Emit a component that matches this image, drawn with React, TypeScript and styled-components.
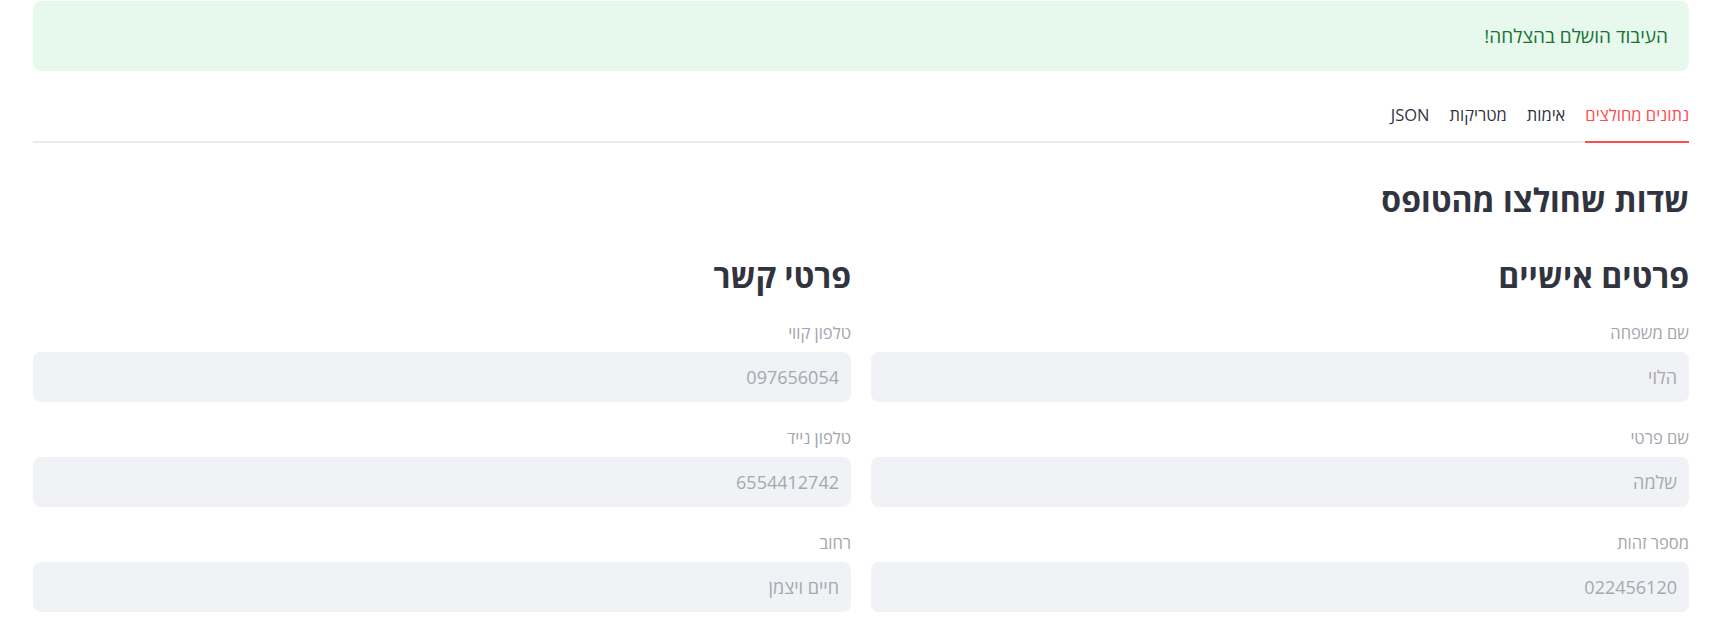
import React from "react";
import styled, { createGlobalStyle } from "styled-components";

const Global = createGlobalStyle`
  html, body { margin: 0; padding: 0; background: #ffffff; }
  body { font-family: "Open Sans", "Noto Sans", "DejaVu Sans", sans-serif; color: #31333f; }
  * { box-sizing: border-box; }
`;

const Page = styled.div`
  direction: rtl;
  padding: 1px 34px 0 33px;
  display: flex;
  flex-direction: column;
`;

const Alert = styled.div`
  height: 70px;
  border-radius: 8px;
  background: #e7f8ed;
  color: #177233;
  font-size: 19px;
  display: flex;
  align-items: center;
  padding: 0 21px;
`;

const TabList = styled.div`
  margin-top: 29px;
  display: flex;
  gap: 20px;
  border-bottom: 2px solid #ebebeb;
`;

const Tab = styled.div<{ $active?: boolean }>`
  font-size: 16.5px;
  line-height: 24px;
  padding: 3px 0 14px;
  margin-bottom: -2px;
  color: ${(p) => (p.$active ? "#ff4b4b" : "#31333f")};
  border-bottom: 2px solid ${(p) => (p.$active ? "#ff4b4b" : "transparent")};
`;

const Title = styled.h3`
  margin: 37px 0 0;
  font-size: 32px;
  line-height: 40px;
  font-weight: 700;
  color: #31333f;
`;

const Columns = styled.div`
  display: grid;
  grid-template-columns: 1fr 1fr;
  gap: 20px;
  margin-top: 36px;
`;

const Column = styled.div`
  display: flex;
  flex-direction: column;
`;

const ColumnTitle = styled.h3`
  margin: 0 0 27px;
  font-size: 32px;
  line-height: 40px;
  font-weight: 700;
  color: #31333f;
`;

const Field = styled.div`
  display: flex;
  flex-direction: column;
  gap: 9px;
  margin-bottom: 26px;
`;

const Label = styled.label`
  font-size: 16.5px;
  line-height: 20px;
  color: #a3a5ad;
`;

const Input = styled.div`
  height: 50px;
  border-radius: 8px;
  background: #f0f2f6;
  color: #a7a8ae;
  font-size: 18px;
  display: flex;
  align-items: center;
  padding: 0 12px;
`;

const tabs = ["נתונים מחולצים", "אימות", "מטריקות", "JSON"];

const personal = [
  { label: "שם משפחה", value: "הלוי" },
  { label: "שם פרטי", value: "שלמה" },
  { label: "מספר זהות", value: "022456120" },
];

const contact = [
  { label: "טלפון קווי", value: "097656054" },
  { label: "טלפון נייד", value: "6554412742" },
  { label: "רחוב", value: "חיים ויצמן" },
];

function Section({ title, fields }: { title: string; fields: { label: string; value: string }[] }) {
  return (
    <Column>
      <ColumnTitle>{title}</ColumnTitle>
      {fields.map((f) => (
        <Field key={f.label}>
          <Label>{f.label}</Label>
          <Input>{f.value}</Input>
        </Field>
      ))}
    </Column>
  );
}

export default function App() {
  return (
    <>
      <Global />
      <Page>
        <Alert>העיבוד הושלם בהצלחה!</Alert>
        <TabList>
          {tabs.map((t, i) => (
            <Tab key={t} $active={i === 0}>
              {t}
            </Tab>
          ))}
        </TabList>
        <Title>שדות שחולצו מהטופס</Title>
        <Columns>
          <Section title="פרטים אישיים" fields={personal} />
          <Section title="פרטי קשר" fields={contact} />
        </Columns>
      </Page>
    </>
  );
}
